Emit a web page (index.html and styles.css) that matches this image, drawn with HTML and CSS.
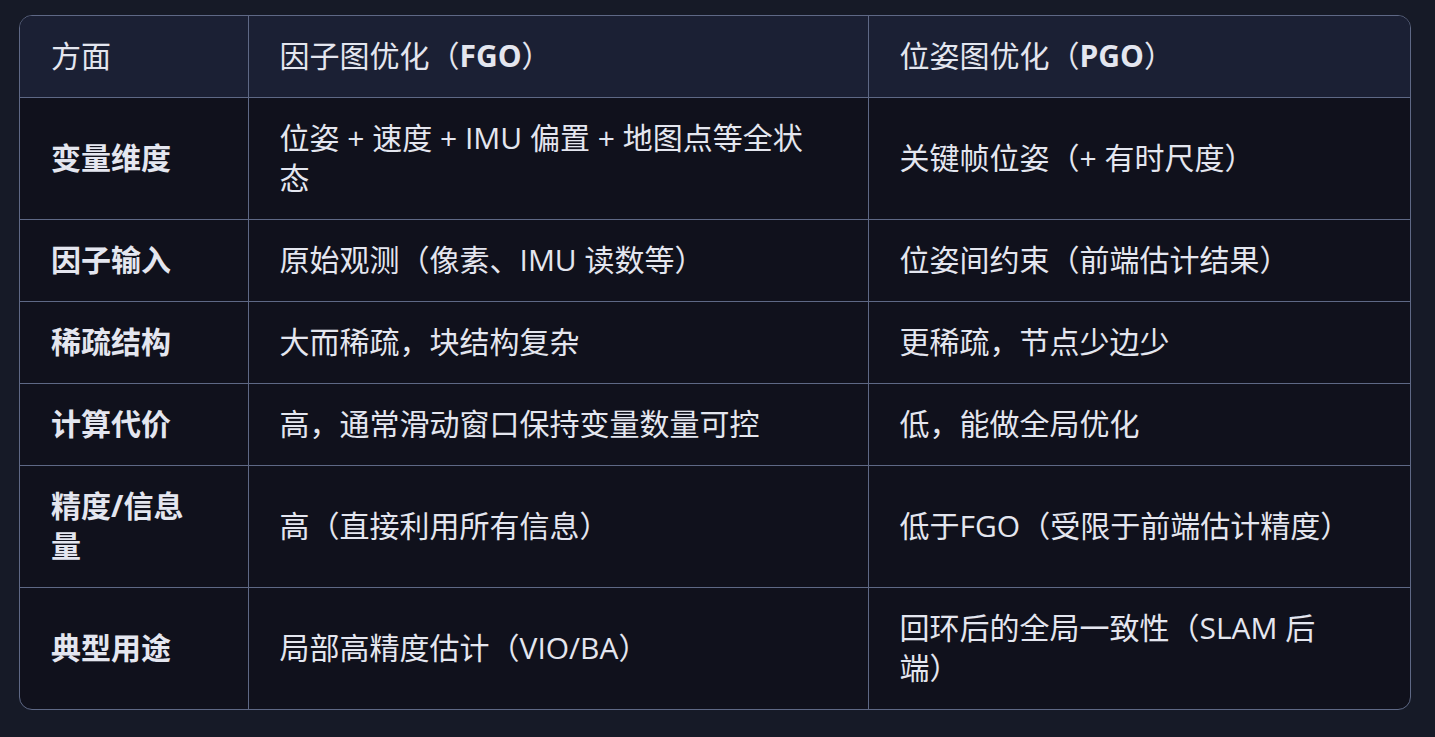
FILE: index.html
```html
<!DOCTYPE html>
<html lang="zh-CN">
<head>
<meta charset="utf-8">
<title>FGO vs PGO</title>
<link rel="stylesheet" href="styles.css">
</head>
<body>
<div class="table-wrap">
  <table class="cmp">
    <colgroup>
      <col class="c1"><col class="c2"><col class="c3">
    </colgroup>
    <thead>
      <tr>
        <th>方面</th>
        <th>因子图优化（<strong>FGO</strong>）</th>
        <th>位姿图优化（<strong>PGO</strong>）</th>
      </tr>
    </thead>
    <tbody>
      <tr>
        <td class="key">变量维度</td>
        <td>位姿 + 速度 + IMU 偏置 + 地图点等全状态</td>
        <td>关键帧位姿（+ 有时尺度）</td>
      </tr>
      <tr>
        <td class="key">因子输入</td>
        <td>原始观测（像素、IMU 读数等）</td>
        <td>位姿间约束（前端估计结果）</td>
      </tr>
      <tr>
        <td class="key">稀疏结构</td>
        <td>大而稀疏，块结构复杂</td>
        <td>更稀疏，节点少边少</td>
      </tr>
      <tr>
        <td class="key">计算代价</td>
        <td>高，通常滑动窗口保持变量数量可控</td>
        <td>低，能做全局优化</td>
      </tr>
      <tr>
        <td class="key">精度/信息量</td>
        <td>高（直接利用所有信息）</td>
        <td>低于FGO（受限于前端估计精度）</td>
      </tr>
      <tr>
        <td class="key">典型用途</td>
        <td>局部高精度估计（VIO/BA）</td>
        <td>回环后的全局一致性（SLAM 后端）</td>
      </tr>
    </tbody>
  </table>
</div>
</body>
</html>
```

FILE: styles.css
```css
html, body {
  margin: 0;
  padding: 0;
  background: #161a27;
}

body {
  padding: 15px 26px 0 19px;
  font-family: "Open Sans", "Noto Sans CJK SC", sans-serif;
  color: #e4e6ef;
}

.table-wrap {
  width: 1390px;
  border: 1px solid #5e6885;
  border-radius: 13px;
  overflow: hidden;
  background: #10111c;
}

.cmp {
  width: 100%;
  border-collapse: collapse;
  table-layout: fixed;
  font-size: 30px;
  line-height: 40px;
}

.c1 { width: 228px; }
.c2 { width: 620px; }
.c3 { width: 542px; }

.cmp th,
.cmp td {
  padding: 20px 60px 21px 31px;
  text-align: left;
  vertical-align: middle;
  border-right: 1px solid #5e6885;
  border-bottom: 1px solid #5e6885;
}

.cmp th:last-child,
.cmp td:last-child {
  border-right: none;
}

.cmp tbody tr:last-child td {
  border-bottom: none;
}

.cmp thead th {
  background: #1b2034;
  font-weight: 400;
}

.cmp thead strong {
  font-weight: 700;
}

.cmp td.key {
  font-weight: 700;
}
```
